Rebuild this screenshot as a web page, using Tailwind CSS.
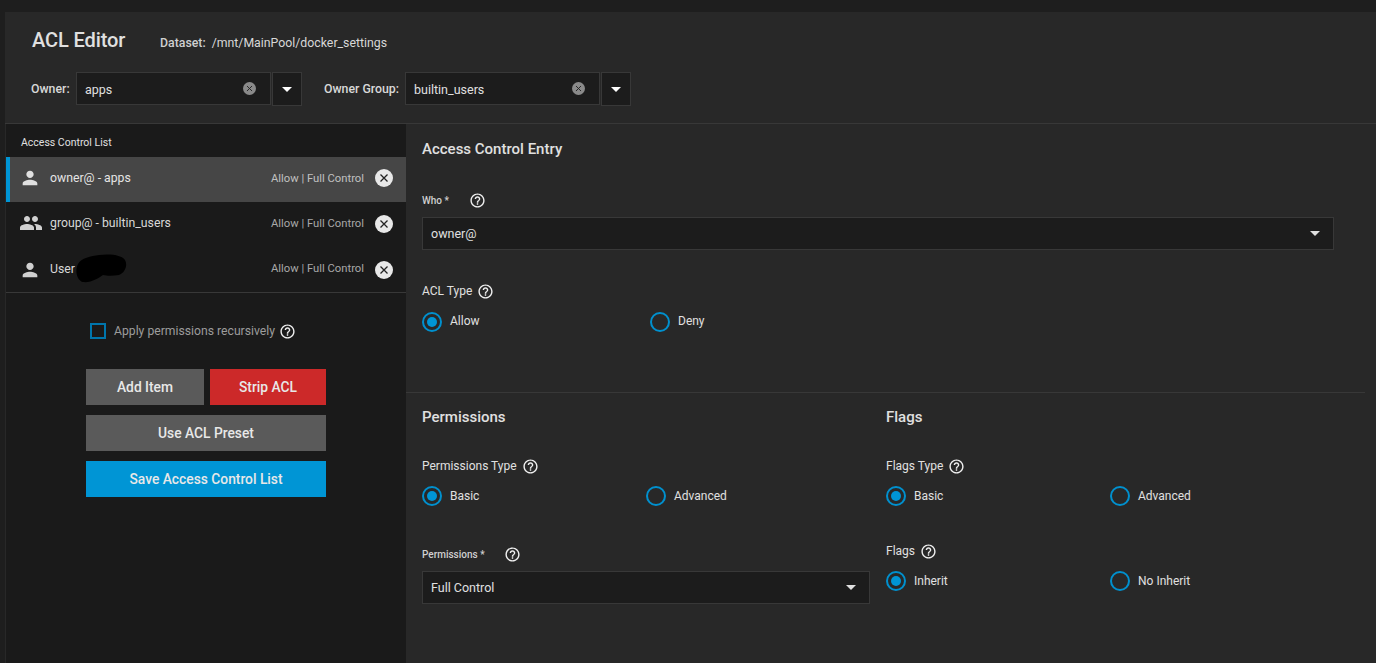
<!DOCTYPE html>
<html lang="en">

<head>
    <meta charset="UTF-8">
    <title>ACL Editor</title>
    <script src="https://cdn.jsdelivr.net/npm/@tailwindcss/browser@4"></script>
</head>

<body class="bg-[#1e1e1e] h-[663px] overflow-hidden font-['Roboto',sans-serif] text-[#e0e0e0]">

    <!-- Icon defs -->
    <svg class="hidden">
        <symbol id="help" viewBox="0 0 24 24"><path fill="currentColor" d="M11 18h2v-2h-2v2zm1-16C6.48 2 2 6.48 2 12s4.48 10 10 10 10-4.48 10-10S17.52 2 12 2zm0 18c-4.41 0-8-3.59-8-8s3.59-8 8-8 8 3.59 8 8-3.59 8-8 8zm0-14c-2.21 0-4 1.79-4 4h2c0-1.1.9-2 2-2s2 .9 2 2c0 2-3 1.75-3 5h2c0-2.25 3-2.5 3-5 0-2.21-1.79-4-4-4z"/></symbol>
        <symbol id="person" viewBox="0 0 24 24"><path fill="currentColor" d="M12 12c2.21 0 4-1.79 4-4s-1.79-4-4-4-4 1.79-4 4 1.79 4 4 4zm0 2c-2.67 0-8 1.34-8 4v2h16v-2c0-2.66-5.33-4-8-4z"/></symbol>
        <symbol id="group" viewBox="0 0 24 24"><path fill="currentColor" d="M16 11c1.66 0 2.99-1.34 2.99-3S17.66 5 16 5c-1.66 0-3 1.34-3 3s1.34 3 3 3zm-8 0c1.66 0 2.99-1.34 2.99-3S9.66 5 8 5C6.34 5 5 6.34 5 8s1.34 3 3 3zm0 2c-2.33 0-7 1.17-7 3.5V19h14v-2.5c0-2.33-4.67-3.5-7-3.5zm8 0c-.29 0-.62.02-.97.05 1.16.84 1.97 1.97 1.97 3.45V19h6v-2.5c0-2.33-4.67-3.5-7-3.5z"/></symbol>
        <symbol id="cancel" viewBox="0 0 18 18"><circle cx="9" cy="9" r="9" fill="currentColor"/><path d="M5.5 5.5l7 7M12.5 5.5l-7 7" stroke="#222" stroke-width="1.3"/></symbol>
    </svg>

    <div class="ml-[5px] mt-[12px] h-[651px] bg-[#282828] flex flex-col">

        <!-- Header -->
        <div class="h-[112px] shrink-0 border-b border-[#383838] pl-[26px]">
            <div class="flex items-center h-[56px]">
                <h1 class="ml-[1px] text-[20px] font-medium text-[#e0e0e0] tracking-[-0.1px] w-[128px]">ACL Editor</h1>
                <span class="text-[12.3px] font-medium text-[#d0d0d0] mt-[6px]">Dataset:</span>
                <span class="text-[12.3px] text-[#d8d8d8] ml-[6px] mt-[6px]">/mnt/MainPool/docker_settings</span>
            </div>
            <div class="flex items-start mt-[4px]">
                <label class="self-center text-[12.3px] font-medium text-[#d8d8d8] w-[45px]">Owner:</label>
                <div class="w-[195px] h-[33px] bg-[#1c1c1c] border border-[#383838] flex items-center justify-between pl-[8px] pr-[14px] text-[12.5px]">
                    <span class="pt-[3px]">apps</span>
                    <svg class="w-[13px] h-[13px] text-[#8a8a8a]"><use href="#cancel"/></svg>
                </div>
                <div class="ml-[1px] w-[30px] h-[34px] bg-[#1c1c1c] border border-[#383838] flex items-center justify-center">
                    <div class="w-0 h-0 border-x-[5px] border-x-transparent border-t-[5px] border-t-white"></div>
                </div>
                <label class="self-center ml-[22px] text-[12.3px] font-medium text-[#d8d8d8] w-[81px]">Owner Group:</label>
                <div class="w-[195px] h-[33px] bg-[#1c1c1c] border border-[#383838] flex items-center justify-between pl-[8px] pr-[14px] text-[12.5px]">
                    <span class="pt-[3px]">builtin_users</span>
                    <svg class="w-[13px] h-[13px] text-[#8a8a8a]"><use href="#cancel"/></svg>
                </div>
                <div class="ml-[1px] w-[30px] h-[34px] bg-[#1c1c1c] border border-[#383838] flex items-center justify-center">
                    <div class="w-0 h-0 border-x-[5px] border-x-transparent border-t-[5px] border-t-white"></div>
                </div>
            </div>
        </div>

        <div class="flex flex-1">

            <!-- Access Control List -->
            <div class="w-[400px] shrink-0 ml-[1px] bg-[#1a1a1a]">
                <div class="h-[33px] pl-[15px] pt-[12px] text-[10.5px] leading-[14px] text-[#e0e0e0]">Access Control List</div>

                <div class="h-[45px] bg-[#464646] border-l-[4px] border-[#0095d5] flex items-center pl-[9px] pr-[13px] text-[12.25px]">
                    <svg class="mb-[4px] w-[22px] h-[22px] text-[#e0e0e0] shrink-0"><use href="#person"/></svg>
                    <span class="mb-[2px] ml-[9px] text-[#e4e4e4]">owner@ - apps</span>
                    <span class="ml-auto text-[11.25px] text-[#c0c0c0]">Allow | Full Control</span>
                    <svg class="mb-[4px] ml-[11px] w-[18px] h-[18px] text-[#e8e8e8]"><use href="#cancel"/></svg>
                </div>
                <div class="h-[45px] flex items-center pl-[13px] pr-[13px] text-[12.25px]">
                    <svg class="mb-[3px] ml-0 w-[24px] h-[24px] text-[#d0d0d0] shrink-0"><use href="#group"/></svg>
                    <span class="mb-[2px] ml-[7px] text-[#d8d8d8]">group@ - builtin_users</span>
                    <span class="ml-auto text-[11.25px] text-[#a8a8a8]">Allow | Full Control</span>
                    <svg class="mb-[2px] ml-[11px] w-[18px] h-[18px] text-[#e8e8e8]"><use href="#cancel"/></svg>
                </div>
                <div class="h-[46px] flex items-center pl-[13px] pr-[13px] text-[12.25px] border-b border-[#383838] relative">
                    <svg class="w-[22px] h-[22px] text-[#d0d0d0] shrink-0"><use href="#person"/></svg>
                    <span class="ml-[9px] text-[#d8d8d8]">User</span>
                    <!-- blacked out user name -->
                    <svg class="absolute left-[69px] top-[7px] w-[52px] h-[30px]" viewBox="0 0 52 30"><path fill="#000" d="M3 10C6 4 16 2 24 1c8-1 22-1 26 5 3 5 0 13-6 15-6 1-12 1-16 0-4 3-12 8-20 7C3 27-1 18 3 10z"/></svg>
                    <span class="ml-auto text-[11.25px] text-[#a8a8a8]">Allow | Full Control</span>
                    <svg class="ml-[11px] w-[18px] h-[18px] text-[#e8e8e8]"><use href="#cancel"/></svg>
                </div>

                <div class="flex items-center mt-[30px] ml-[84px] h-[16px]">
                    <div class="w-[16px] h-[16px] border-2 border-[#0076ad]"></div>
                    <span class="ml-[8px] text-[12.2px] text-[#9c9c9c]">Apply permissions recursively</span>
                    <svg class="ml-[4px] w-[17px] h-[17px] text-[#f0f0f0]"><use href="#help"/></svg>
                </div>

                <div class="mt-[30px] ml-[80px] w-[240px] flex flex-col gap-[10px] text-[13.8px] font-medium text-[#e8e8e8]">
                    <div class="flex gap-[6px]">
                        <button class="w-[118px] h-[36px] bg-[#5a5a5a]">Add Item</button>
                        <button class="w-[116px] h-[36px] bg-[#cc2929]">Strip ACL</button>
                    </div>
                    <button class="h-[36px] bg-[#5a5a5a]">Use ACL Preset</button>
                    <button class="h-[36px] bg-[#0095d5]">Save Access Control List</button>
                </div>
            </div>

            <!-- Access Control Entry -->
            <div class="flex-1 min-w-0">
                <div class="h-[269px] mr-[11px] border-b border-[#383838] pl-[16px] pt-[15px]">
                    <h2 class="h-[20px] text-[15px] leading-[20px] font-medium text-[#e0e0e0]">Access Control Entry</h2>

                    <div class="mt-[33px] h-[16px] flex items-center text-[10px] font-medium text-[#d0d0d0]">
                        <span class="w-[47px]">Who *</span>
                        <svg class="w-[17px] h-[17px] text-[#f0f0f0]"><use href="#help"/></svg>
                    </div>
                    <div class="mt-[9px] w-[912px] h-[33px] bg-[#1c1c1c] border border-[#383838] flex items-center justify-between pl-[8px] pr-[13px] text-[12.5px]">
                        <span class="pt-[2px]">owner@</span>
                        <div class="w-0 h-0 border-x-[5px] border-x-transparent border-t-[5px] border-t-[#e0e0e0]"></div>
                    </div>

                    <div class="mt-[33px] h-[16px] flex items-center text-[12px] text-[#e0e0e0]">
                        <span>ACL Type</span>
                        <svg class="ml-[5px] w-[17px] h-[17px] text-[#f0f0f0]"><use href="#help"/></svg>
                    </div>
                    <div class="mt-[13px] flex items-center text-[12px] text-[#e0e0e0]">
                        <div class="w-[228px] flex items-center gap-[8px]">
                            <div class="w-[20px] h-[20px] rounded-full border-2 border-[#0090ce] flex items-center justify-center"><div class="w-[10px] h-[10px] rounded-full bg-[#0095d5]"></div></div>
                            <span class="mb-[2px]">Allow</span>
                        </div>
                        <div class="flex items-center gap-[8px]">
                            <div class="w-[20px] h-[20px] rounded-full border-2 border-[#0090ce]"></div>
                            <span class="mb-[2px]">Deny</span>
                        </div>
                    </div>
                </div>

                <div class="pl-[16px] pt-[14px] flex gap-[16px]">
                    <!-- Permissions -->
                    <div class="w-[448px]">
                        <h2 class="h-[20px] text-[15px] leading-[20px] font-medium text-[#e0e0e0]">Permissions</h2>
                        <div class="mt-[31px] h-[16px] flex items-center text-[12px] text-[#e0e0e0]">
                            <span>Permissions Type</span>
                            <svg class="ml-[5px] w-[17px] h-[17px] text-[#f0f0f0]"><use href="#help"/></svg>
                        </div>
                        <div class="mt-[12px] flex items-center text-[12px] text-[#e0e0e0]">
                            <div class="w-[224px] flex items-center gap-[8px]">
                                <div class="w-[20px] h-[20px] rounded-full border-2 border-[#0090ce] flex items-center justify-center"><div class="w-[10px] h-[10px] rounded-full bg-[#0095d5]"></div></div>
                                <span>Basic</span>
                            </div>
                            <div class="flex items-center gap-[8px]">
                                <div class="w-[20px] h-[20px] rounded-full border-2 border-[#0090ce]"></div>
                                <span>Advanced</span>
                            </div>
                        </div>
                        <div class="mt-[40px] h-[16px] flex items-center text-[10px] font-medium text-[#d0d0d0]">
                            <span class="w-[82px]">Permissions *</span>
                            <svg class="w-[17px] h-[17px] text-[#f0f0f0]"><use href="#help"/></svg>
                        </div>
                        <div class="mt-[9px] h-[33px] bg-[#1c1c1c] border border-[#383838] flex items-center justify-between pl-[8px] pr-[13px] text-[12.5px]">
                            <span class="pt-[2px]">Full Control</span>
                            <div class="w-0 h-0 border-x-[5px] border-x-transparent border-t-[5px] border-t-[#e0e0e0]"></div>
                        </div>
                    </div>

                    <!-- Flags -->
                    <div class="flex-1">
                        <h2 class="h-[20px] text-[15px] leading-[20px] font-medium text-[#e0e0e0]">Flags</h2>
                        <div class="mt-[31px] h-[16px] flex items-center text-[12px] text-[#e0e0e0]">
                            <span>Flags Type</span>
                            <svg class="ml-[5px] w-[17px] h-[17px] text-[#f0f0f0]"><use href="#help"/></svg>
                        </div>
                        <div class="mt-[12px] flex items-center text-[12px] text-[#e0e0e0]">
                            <div class="w-[224px] flex items-center gap-[8px]">
                                <div class="w-[20px] h-[20px] rounded-full border-2 border-[#0090ce] flex items-center justify-center"><div class="w-[10px] h-[10px] rounded-full bg-[#0095d5]"></div></div>
                                <span>Basic</span>
                            </div>
                            <div class="flex items-center gap-[8px]">
                                <div class="w-[20px] h-[20px] rounded-full border-2 border-[#0090ce]"></div>
                                <span>Advanced</span>
                            </div>
                        </div>
                        <div class="mt-[37px] h-[16px] flex items-center text-[12px] text-[#e0e0e0]">
                            <span>Flags</span>
                            <svg class="ml-[5px] w-[17px] h-[17px] text-[#f0f0f0]"><use href="#help"/></svg>
                        </div>
                        <div class="mt-[12px] flex items-center text-[12px] text-[#e0e0e0]">
                            <div class="w-[224px] flex items-center gap-[8px]">
                                <div class="w-[20px] h-[20px] rounded-full border-2 border-[#0090ce] flex items-center justify-center"><div class="w-[10px] h-[10px] rounded-full bg-[#0095d5]"></div></div>
                                <span>Inherit</span>
                            </div>
                            <div class="flex items-center gap-[8px]">
                                <div class="w-[20px] h-[20px] rounded-full border-2 border-[#0090ce]"></div>
                                <span>No Inherit</span>
                            </div>
                        </div>
                    </div>
                </div>
            </div>
        </div>
    </div>

</body>

</html>
